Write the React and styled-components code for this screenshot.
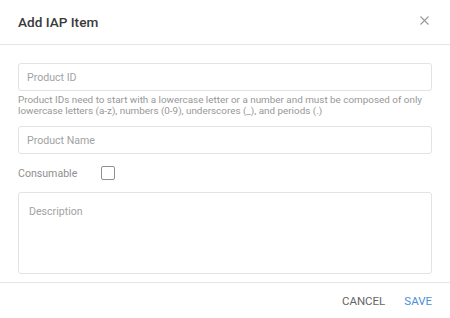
import React from "react";
import styled, { createGlobalStyle } from "styled-components";

const Global = createGlobalStyle`
  html, body { margin: 0; padding: 0; background: #fff; }
  body { font-family: Roboto, "Noto Sans", Arial, sans-serif; -webkit-font-smoothing: antialiased; }
  * { box-sizing: border-box; }
`;

const Dialog = styled.div`
  width: 450px;
  height: 318px;
  display: flex;
  flex-direction: column;
  background: #fff;
`;

const Header = styled.div`
  height: 45px;
  padding: 0 18px;
  display: flex;
  align-items: center;
  justify-content: space-between;
  border-bottom: 1px solid #e6e6e6;
`;

const Title = styled.h2`
  margin: 0;
  font-size: 13.6px;
  font-weight: 500;
  color: #3a3a3a;
`;

const CloseButton = styled.button`
  border: none;
  background: none;
  padding: 0;
  width: 12px;
  height: 12px;
  margin-right: 2px;
  margin-bottom: 3px;
  display: flex;
  align-items: center;
  justify-content: center;
  cursor: pointer;
`;

const Body = styled.div`
  padding: 18px 18px 8px;
  display: flex;
  flex-direction: column;
`;

const Input = styled.input`
  width: 100%;
  height: 28px;
  border: 1px solid #e3e3e3;
  border-radius: 3px;
  padding: 0 8px;
  font-family: inherit;
  font-size: 10.6px;
  color: #333;
  outline: none;
  &::placeholder { color: #a2a2a2; }
`;

const Help = styled.p`
  margin: 3px 0 10px;
  font-size: 9.9px;
  line-height: 11px;
  color: #979797;
`;

const CheckRow = styled.label`
  display: flex;
  align-items: center;
  height: 14px;
  margin: 12px 0 12px;
  font-size: 10.6px;
  color: #8f8f8f;
`;

const CheckLabel = styled.span`
  width: 83px;
`;

const Box = styled.span`
  width: 14px;
  height: 14px;
  border: 1px solid #8f8f8f;
  border-radius: 2px;
  display: inline-block;
`;

const TextArea = styled.textarea`
  width: 100%;
  height: 82px;
  border: 1px solid #e3e3e3;
  border-radius: 3px;
  padding: 12px 10px;
  font-family: inherit;
  font-size: 10.6px;
  resize: none;
  outline: none;
  &::placeholder { color: #a2a2a2; }
`;

const Footer = styled.div`
  border-top: 1px solid #e6e6e6;
  flex: 1;
  display: flex;
  align-items: center;
  justify-content: flex-end;
  gap: 19px;
  padding: 0 18px 0;
`;

const TextButton = styled.button`
  border: none;
  background: none;
  padding: 0;
  font-family: inherit;
  font-size: 11.5px;
  text-transform: uppercase;
  color: ${(p) => (p.$primary ? "#4a90d9" : "#666")};
  cursor: pointer;
`;

export default function App() {
  return (
    <>
      <Global />
      <Dialog>
        <Header>
          <Title>Add IAP Item</Title>
          <CloseButton aria-label="Close">
            <svg width="9" height="9" viewBox="0 0 9 9">
              <path d="M0.5 0.5L8.5 8.5M8.5 0.5L0.5 8.5" stroke="#999" strokeWidth="1.1" />
            </svg>
          </CloseButton>
        </Header>
        <Body>
          <Input placeholder="Product ID" />
          <Help>
            Product IDs need to start with a lowercase letter or a number and must be composed of only
            lowercase letters (a-z), numbers (0-9), underscores (_), and periods (.)
          </Help>
          <Input placeholder="Product Name" />
          <CheckRow>
            <CheckLabel>Consumable</CheckLabel>
            <Box />
          </CheckRow>
          <TextArea placeholder="Description" />
        </Body>
        <Footer>
          <TextButton>Cancel</TextButton>
          <TextButton $primary>Save</TextButton>
        </Footer>
      </Dialog>
    </>
  );
}
